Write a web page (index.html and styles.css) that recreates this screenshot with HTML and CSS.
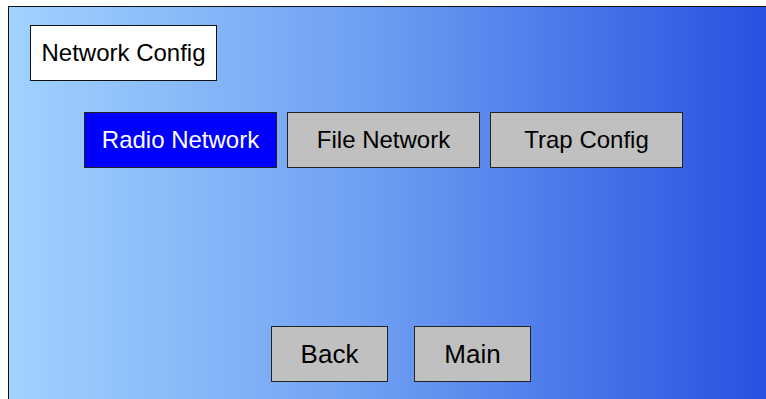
FILE: index.html
```html
<!DOCTYPE html>
<html lang="en">
<head>
    <meta charset="UTF-8">
    <meta name="viewport" content="width=device-width, initial-scale=1.0">
    <title>Network Config</title>

    <link rel="stylesheet" href="styles.css">

</head>
<body>
    <div class="screen">
        <div class="title">Network Config</div>

        <div class="menu">
            <button class="active">Radio Network</button>
            <button>File Network</button>
            <button>Trap Config</button>
        </div>

        <div class="nav">
            <button>Back</button>
            <button>Main</button>
        </div>
    </div>
</body>
</html>
```

FILE: styles.css
```css
html, body {
    margin: 0;
    background-color: #fff;
    font-family: "Liberation Sans", Arial, sans-serif;
    overflow: hidden;
}

body {
    padding: 6px 0 0 8px;
    height: 100vh;
    box-sizing: border-box;
}

.screen {
    height: 100%;
    border-top: 1px solid #111;
    border-left: 1px solid #111;
    background: linear-gradient(to right, #a2d2ff 0%, #6f9ff2 45%, #2148df 100%);
    background-size: 800px 100%;
    padding: 18px 0 0 21px;
    box-sizing: border-box;
    display: flex;
    flex-direction: column;
    align-items: flex-start;
}

.title {
    width: 187px;
    height: 56px;
    box-sizing: border-box;
    background-color: #fff;
    border: 1px solid #111;
    font-size: 24px;
    color: #000;
    display: flex;
    justify-content: center;
    align-items: center;
}

.menu {
    display: flex;
    gap: 10px;
    margin: 31px 0 0 54px;
}

.menu button,
.nav button {
    height: 56px;
    box-sizing: border-box;
    border: 1px solid #222;
    border-radius: 0;
    background-color: #c0c0c0;
    color: #000;
    font-family: inherit;
    font-size: 24px;
    padding: 0;
}

.menu button {
    width: 193px;
}

.menu .active {
    background-color: #0000ff;
    color: #fff;
}

.nav {
    display: flex;
    gap: 26px;
    margin: 158px 0 0 241px;
}

.nav button {
    width: 117px;
    font-size: 26px;
}
```
